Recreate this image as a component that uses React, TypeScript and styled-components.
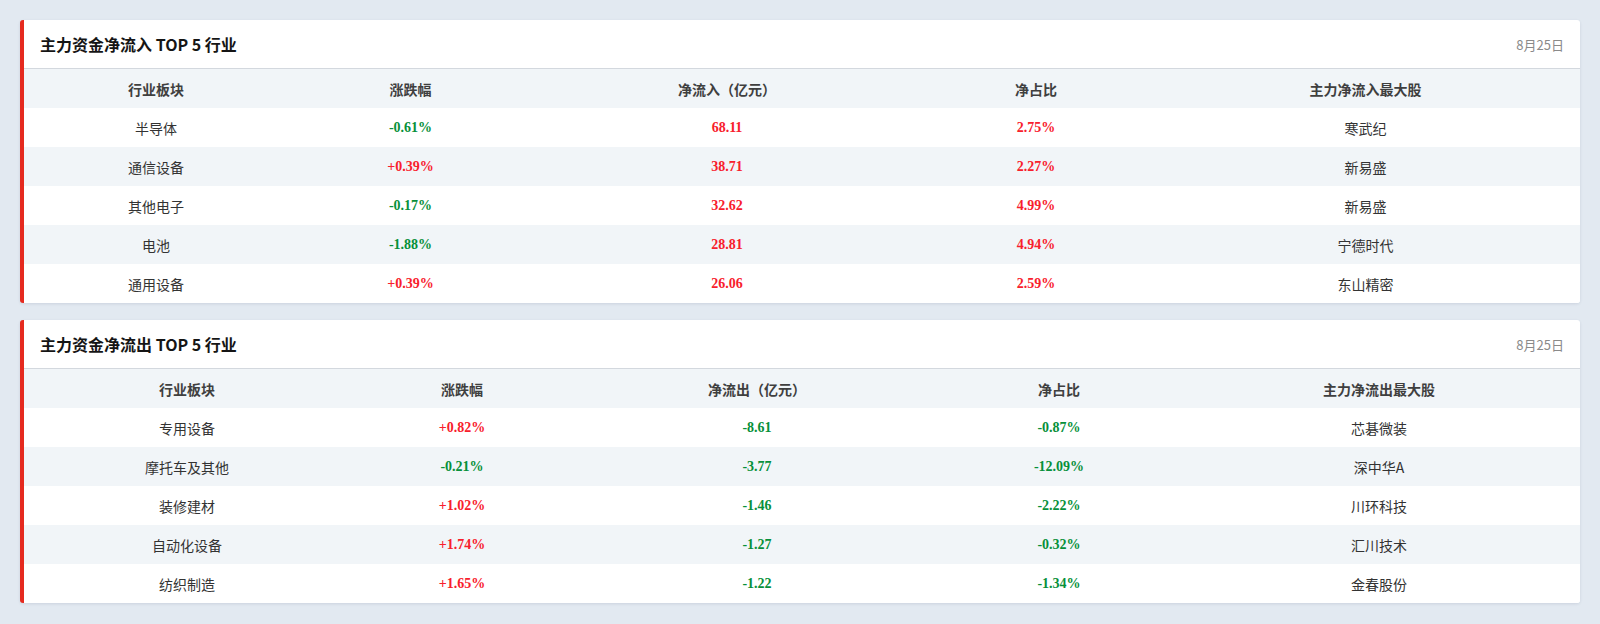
import styled, { createGlobalStyle } from "styled-components";

const GlobalStyle = createGlobalStyle`
  html, body {
    margin: 0;
    padding: 0;
    background: #e2e9f1;
  }
  body {
    font-family: "Noto Sans CJK SC", "Noto Sans", sans-serif;
    color: #333;
  }
`;

type Tone = "up" | "down";

type Row = {
  name: string;
  change: string;
  flow: string;
  ratio: string;
  stock: string;
};

const Page = styled.div`
  display: flex;
  flex-direction: column;
  gap: 17px;
  padding: 20px 20px 21px;
`;

const Card = styled.section`
  background: #fff;
  border-left: 4px solid #e52a1f;
  border-radius: 3px;
  box-shadow: 0 1px 3px rgba(40, 60, 90, 0.12);
  overflow: hidden;
`;

const CardHeader = styled.header`
  height: 48px;
  display: flex;
  align-items: center;
  justify-content: space-between;
  padding: 0 16px;
  border-bottom: 1px solid #d3d8de;
`;

const Title = styled.h2`
  margin: 0;
  font-size: 16px;
  font-weight: 700;
  color: #151515;
`;

const DateText = styled.span`
  font-size: 13px;
  color: #8a8a8a;
`;

const Table = styled.table`
  width: 100%;
  border-collapse: collapse;
  table-layout: fixed;
`;

const HeadCell = styled.th`
  height: 39px;
  padding: 0;
  font-size: 14px;
  font-weight: 700;
  color: #3f3f3f;
  text-align: center;
  background: #f1f5f8;
`;

const BodyRow = styled.tr`
  &:nth-child(even) td {
    background: #f1f5f8;
  }
`;

const TextCell = styled.td`
  height: 39px;
  padding: 0;
  font-size: 14px;
  color: #333;
  text-align: center;
  background: #fff;
`;

const NumCell = styled.td<{ $tone: Tone }>`
  height: 39px;
  padding: 0;
  font-family: "Liberation Serif", "Times New Roman", serif;
  font-size: 14px;
  font-weight: 700;
  text-align: center;
  background: #fff;
  color: ${(p) => (p.$tone === "up" ? "#f8202c" : "#07903a")};
`;

const tone = (v: string): Tone => (v.startsWith("-") ? "down" : "up");

function FlowTable({
  title,
  flowLabel,
  stockLabel,
  widths,
  rows,
}: {
  title: string;
  flowLabel: string;
  stockLabel: string;
  widths: number[];
  rows: Row[];
}) {
  return (
    <Card>
      <CardHeader>
        <Title>{title}</Title>
        <DateText>8月25日</DateText>
      </CardHeader>
      <Table>
        <colgroup>
          {widths.map((w, i) => (
            <col key={i} style={{ width: w }} />
          ))}
          <col />
        </colgroup>
        <thead>
          <tr>
            <HeadCell>行业板块</HeadCell>
            <HeadCell>涨跌幅</HeadCell>
            <HeadCell>{flowLabel}</HeadCell>
            <HeadCell>净占比</HeadCell>
            <HeadCell>{stockLabel}</HeadCell>
          </tr>
        </thead>
        <tbody>
          {rows.map((r) => (
            <BodyRow key={r.name}>
              <TextCell>{r.name}</TextCell>
              <NumCell $tone={tone(r.change)}>{r.change}</NumCell>
              <NumCell $tone={tone(r.flow)}>{r.flow}</NumCell>
              <NumCell $tone={tone(r.ratio)}>{r.ratio}</NumCell>
              <TextCell>{r.stock}</TextCell>
            </BodyRow>
          ))}
        </tbody>
      </Table>
    </Card>
  );
}

const inflow: Row[] = [
  { name: "半导体", change: "-0.61%", flow: "68.11", ratio: "2.75%", stock: "寒武纪" },
  { name: "通信设备", change: "+0.39%", flow: "38.71", ratio: "2.27%", stock: "新易盛" },
  { name: "其他电子", change: "-0.17%", flow: "32.62", ratio: "4.99%", stock: "新易盛" },
  { name: "电池", change: "-1.88%", flow: "28.81", ratio: "4.94%", stock: "宁德时代" },
  { name: "通用设备", change: "+0.39%", flow: "26.06", ratio: "2.59%", stock: "东山精密" },
];

const outflow: Row[] = [
  { name: "专用设备", change: "+0.82%", flow: "-8.61", ratio: "-0.87%", stock: "芯碁微装" },
  { name: "摩托车及其他", change: "-0.21%", flow: "-3.77", ratio: "-12.09%", stock: "深中华A" },
  { name: "装修建材", change: "+1.02%", flow: "-1.46", ratio: "-2.22%", stock: "川环科技" },
  { name: "自动化设备", change: "+1.74%", flow: "-1.27", ratio: "-0.32%", stock: "汇川技术" },
  { name: "纺织制造", change: "+1.65%", flow: "-1.22", ratio: "-1.34%", stock: "金春股份" },
];

export default function App() {
  return (
    <>
      <GlobalStyle />
      <Page>
        <FlowTable
          title="主力资金净流入 TOP 5 行业"
          flowLabel="净流入（亿元）"
          stockLabel="主力净流入最大股"
          widths={[264, 245, 388, 230]}
          rows={inflow}
        />
        <FlowTable
          title="主力资金净流出 TOP 5 行业"
          flowLabel="净流出（亿元）"
          stockLabel="主力净流出最大股"
          widths={[326, 224, 366, 238]}
          rows={outflow}
        />
      </Page>
    </>
  );
}
